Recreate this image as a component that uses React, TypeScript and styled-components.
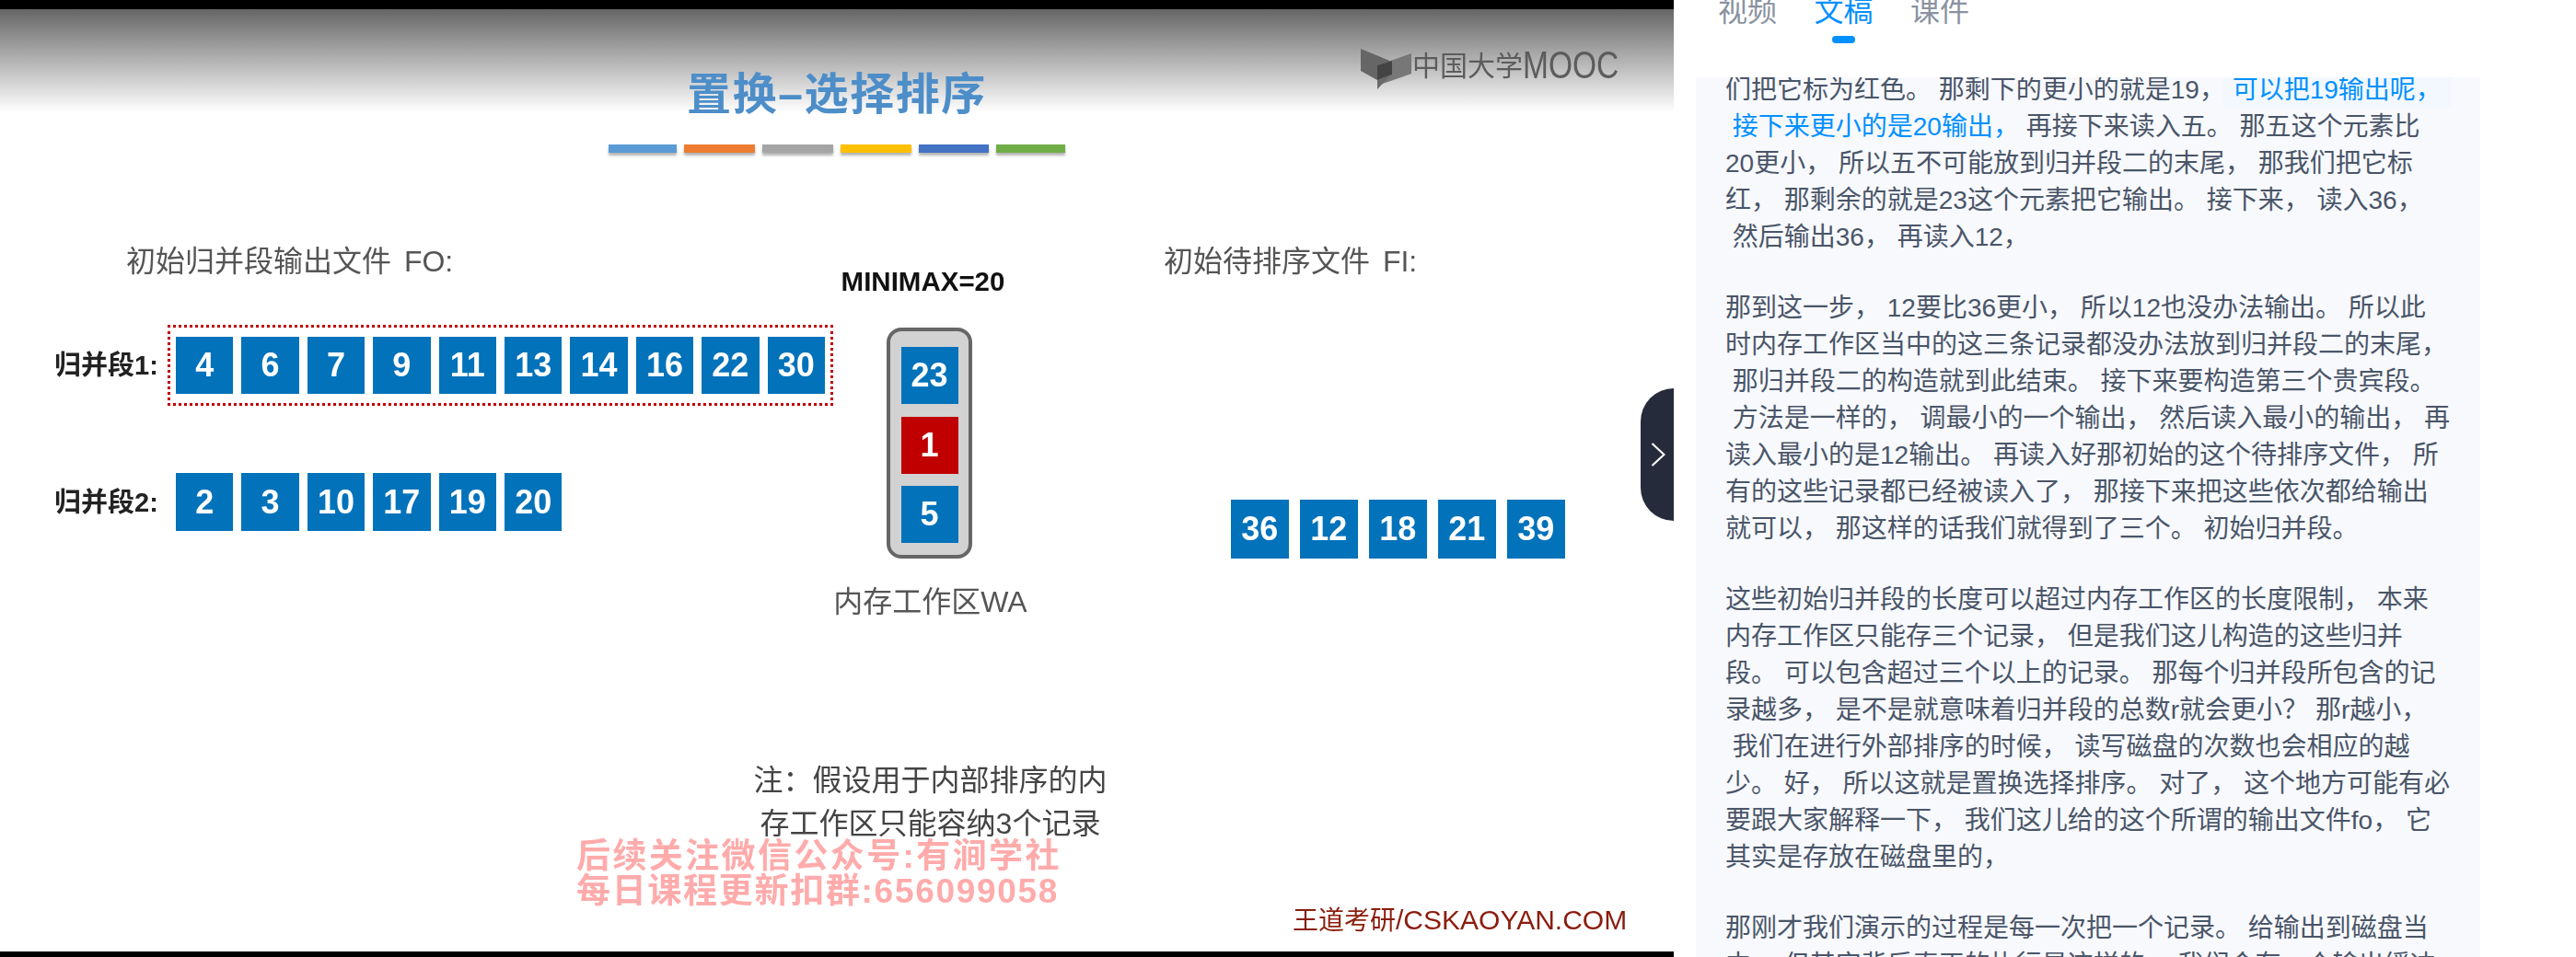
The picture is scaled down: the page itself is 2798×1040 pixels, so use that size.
import React from 'react';
import styled, { createGlobalStyle } from 'styled-components';

const SANS = `"Liberation Sans", "Noto Sans CJK SC", sans-serif`;

const GlobalStyle = createGlobalStyle`
  html, body { margin: 0; padding: 0; background: #fff; }
  body { font-family: ${SANS}; }
`;

const Page = styled.div`
  display: flex;
  width: 2798px;
  height: 1040px;
  overflow: hidden;
  background: #fff;
`;

/* video side */
const Video = styled.div`
  position: relative;
  display: flex;
  flex-direction: column;
  flex: 0 0 1818px;
  min-width: 0;
  height: 1040px;
`;

const BlackBar = styled.div<{ $h: number }>`
  flex: 0 0 ${p => p.$h}px;
  background: #000;
`;

const Slide = styled.div`
  position: relative;
  flex: 1;
  display: flex;
  flex-direction: column;
  background: linear-gradient(#666, #fff) no-repeat 0 0 / 100% 112px, #fff;
  filter: blur(0.7px);
`;

const Title = styled.h1`
  margin: 69px 0 0;
  height: 48px;
  font: 700 48px/48px ${SANS};
  letter-spacing: 1.6px;
  text-align: center;
  color: #4d8ec9;
`;

const ColorBars = styled.div`
  display: flex;
  justify-content: center;
  gap: 8px;
  margin-top: 30px;
`;

const ColorBar = styled.div<{ $c: string; $w: number }>`
  width: ${p => p.$w}px;
  height: 9px;
  background: ${p => p.$c};
  box-shadow: 0 3px 3px rgba(0, 0, 0, 0.3);
`;

const Logo = styled.div`
  position: absolute;
  top: 43px;
  left: 1478px;
  display: flex;
  align-items: center;
  color: #5c5c5c;
`;

const LogoText = styled.div`
  font: 400 30px/34px ${SANS};
  margin-top: -8px;
  white-space: nowrap;
`;

const LogoLatin = styled.span`
  display: inline-block;
  font-size: 33.5px;
  transform: scaleY(1.25);
`;

const Diagram = styled.div`
  display: flex;
  align-items: flex-start;
  margin-top: 102px;
  padding-left: 59px;
`;

const LeftColumn = styled.div`
  flex: 0 0 847px;
`;

const Heading = styled.div<{ $indent: number }>`
  margin-left: ${p => p.$indent}px;
  font: 400 32px/32px ${SANS};
  word-spacing: 5px;
  color: #555;
  white-space: nowrap;
`;

const RunRow = styled.div<{ $top: number }>`
  display: flex;
  align-items: center;
  margin-top: ${p => p.$top}px;
`;

const RunLabel = styled.div`
  flex: 0 0 123px;
  font: 700 29px/32px ${SANS};
  color: #222;
  white-space: nowrap;
`;

const DottedBox = styled.div`
  padding: 10px 6px 10px;
  border: 3px dotted #c00000;
`;

const Cells = styled.div<{ $gap: number; $indent?: number; $top?: number }>`
  display: flex;
  gap: ${p => p.$gap}px;
  margin-left: ${p => p.$indent ?? 0}px;
  margin-top: ${p => p.$top ?? 0}px;
`;

const Cell = styled.div<{ $w?: number; $h?: number; $red?: boolean }>`
  display: flex;
  align-items: center;
  justify-content: center;
  flex: none;
  width: ${p => p.$w ?? 62.4}px;
  height: ${p => p.$h ?? 62}px;
  background: ${p => (p.$red ? '#c00000' : '#0272ba')};
  color: #fff;
  font: 700 36px/1 ${SANS};
`;

const MiddleColumn = styled.div`
  flex: 0 0 209px;
  min-width: 0;
  display: flex;
  flex-direction: column;
  align-items: center;
  padding-top: 23px;
`;

const Minimax = styled.div`
  margin-right: 16px;
  font: 700 29.5px/30px ${SANS};
  color: #111;
  white-space: nowrap;
`;

const MemoryBox = styled.div`
  display: flex;
  flex-direction: column;
  align-items: center;
  gap: 13.5px;
  box-sizing: border-box;
  width: 93px;
  height: 251px;
  margin: 35px 2px 0 0;
  padding-top: 17px;
  border: 4px solid #666;
  border-radius: 16px;
  background: #d2d2d2;
`;

const MemoryLabel = styled.div`
  margin-top: 31px;
  font: 400 32px/32px ${SANS};
  color: #555;
  white-space: nowrap;
`;

const Note = styled.div`
  margin-top: 155px;
  font: 400 32px/47px ${SANS};
  color: #444;
  text-align: center;
  white-space: nowrap;
`;

const RightColumn = styled.div`
  margin-left: 149px;
`;

const Watermark = styled.div`
  position: absolute;
  top: 902px;
  left: 626px;
  font: 700 37px/37.5px ${SANS};
  color: #ffabab;
  white-space: nowrap;
`;

const WatermarkLine = styled.div<{ $spacing: number }>`
  letter-spacing: ${p => p.$spacing}px;
`;

const Credit = styled.div`
  position: absolute;
  top: 974px;
  left: 1404px;
  font: 400 28px/32px ${SANS};
  color: #8b1c0c;
  white-space: nowrap;
`;

const CreditLatin = styled.span`
  font-size: 30px;
`;

const Handle = styled.div`
  position: absolute;
  top: 422px;
  right: 0;
  display: flex;
  align-items: center;
  justify-content: flex-end;
  box-sizing: border-box;
  width: 36px;
  height: 144px;
  padding-right: 9px;
  border-radius: 36px 0 0 36px;
  background: #252b3a;
`;

/* transcript side */
const Side = styled.div`
  flex: 1;
  min-width: 0;
  display: flex;
  flex-direction: column;
  height: 1040px;
  overflow: hidden;
`;

const Tabs = styled.div`
  display: flex;
  gap: 40.5px;
  margin-top: -4px;
  padding-left: 48px;
`;

const Tab = styled.div<{ $active?: boolean }>`
  display: flex;
  flex-direction: column;
  align-items: center;
  font: 400 32px/32px ${SANS};
  color: ${p => (p.$active ? '#0090ff' : '#8a92a0')};
`;

const TabMark = styled.div<{ $on?: boolean }>`
  width: 25px;
  height: 8px;
  margin-top: 11px;
  border-radius: 4px;
  background: ${p => (p.$on ? '#0090ff' : 'transparent')};
`;

const Transcript = styled.div`
  flex: 1;
  width: 852px;
  margin: 37px 0 0 24px;
  padding-left: 32px;
  box-sizing: border-box;
  overflow: hidden;
  background: #f7f9fd;
`;

const TranscriptFlow = styled.div`
  margin-top: -6px;
`;

const Para = styled.div`
  margin-bottom: 37px;
`;

const Line = styled.div`
  font: 400 28px/40px ${SANS};
  color: #4a5568;
  white-space: pre;
`;

const Spoken = styled.span<{ $box?: boolean }>`
  color: #0090ff;
  ${p => (p.$box ? 'background: #f3f8fe; padding: 0 10px 4px; margin-left: -10px;' : '')}
`;

const run1 = [4, 6, 7, 9, 11, 13, 14, 16, 22, 30];
const run2 = [2, 3, 10, 17, 19, 20];
const input = [36, 12, 18, 21, 39];
const colorBars = [
  { c: '#5b9bd5', w: 74 },
  { c: '#ed7d31', w: 77 },
  { c: '#a5a5a5', w: 77 },
  { c: '#ffc000', w: 77 },
  { c: '#4472c4', w: 76 },
  { c: '#70ad47', w: 75 },
];

const paragraphs: React.ReactNode[][] = [
  [
    <>们把它标为红色。 那剩下的更小的就是19， <Spoken $box>可以把19输出呢，</Spoken></>,
    <><Spoken> 接下来更小的是20输出，</Spoken> 再接下来读入五。 那五这个元素比</>,
    '20更小， 所以五不可能放到归并段二的末尾， 那我们把它标',
    '红， 那剩余的就是23这个元素把它输出。 接下来， 读入36，',
    ' 然后输出36， 再读入12，',
  ],
  [
    '那到这一步， 12要比36更小， 所以12也没办法输出。 所以此',
    '时内存工作区当中的这三条记录都没办法放到归并段二的末尾，',
    ' 那归并段二的构造就到此结束。 接下来要构造第三个贵宾段。',
    ' 方法是一样的， 调最小的一个输出， 然后读入最小的输出， 再',
    '读入最小的是12输出。 再读入好那初始的这个待排序文件， 所',
    '有的这些记录都已经被读入了， 那接下来把这些依次都给输出',
    '就可以， 那这样的话我们就得到了三个。 初始归并段。',
  ],
  [
    '这些初始归并段的长度可以超过内存工作区的长度限制， 本来',
    '内存工作区只能存三个记录， 但是我们这儿构造的这些归并',
    '段。 可以包含超过三个以上的记录。 那每个归并段所包含的记',
    '录越多， 是不是就意味着归并段的总数r就会更小？ 那r越小，',
    ' 我们在进行外部排序的时候， 读写磁盘的次数也会相应的越',
    '少。 好， 所以这就是置换选择排序。 对了， 这个地方可能有必',
    '要跟大家解释一下， 我们这儿给的这个所谓的输出文件fo， 它',
    '其实是存放在磁盘里的，',
  ],
  [
    '那刚才我们演示的过程是每一次把一个记录。 给输出到磁盘当',
    '中， 但其实背后真正的执行是这样的， 我们会有一个输出缓冲',
  ],
];

function MoocMark() {
  return (
    <svg width="56" height="44" viewBox="0 0 56 44">
      <polygon points="0,0 34,14 34,28 18,34 0,24" fill="#666" />
      <polygon points="18,18 55,5 55,27 18,40" fill="#777" />
      <polygon points="18,18 34,13 34,28 18,34" fill="#444" />
      <polygon points="18,34 33,28 18,44" fill="#6a6a6a" />
    </svg>
  );
}

export default function App() {
  return (
    <Page>
      <GlobalStyle />
      <Video>
        <BlackBar $h={10} />
        <Slide>
          <Title>置换–选择排序</Title>
          <ColorBars>
            {colorBars.map(b => <ColorBar key={b.c} $c={b.c} $w={b.w} />)}
          </ColorBars>
          <Logo>
            <MoocMark />
            <LogoText>中国大学<LogoLatin>MOOC</LogoLatin></LogoText>
          </Logo>
          <Diagram>
            <LeftColumn>
              <Heading $indent={78}>初始归并段输出文件 FO:</Heading>
              <RunRow $top={53}>
                <RunLabel>归并段1:</RunLabel>
                <DottedBox>
                  <Cells $gap={9}>
                    {run1.map(n => <Cell key={n}>{n}</Cell>)}
                  </Cells>
                </DottedBox>
              </RunRow>
              <RunRow $top={73}>
                <RunLabel>归并段2:</RunLabel>
                <Cells $gap={9} $indent={9}>
                  {run2.map(n => <Cell key={n} $h={63}>{n}</Cell>)}
                </Cells>
              </RunRow>
            </LeftColumn>
            <MiddleColumn>
              <Minimax>MINIMAX=20</Minimax>
              <MemoryBox>
                <Cell $w={62}>23</Cell>
                <Cell $w={62} $red>1</Cell>
                <Cell $w={62}>5</Cell>
              </MemoryBox>
              <MemoryLabel>内存工作区WA</MemoryLabel>
              <Note>注：假设用于内部排序的内<br />存工作区只能容纳3个记录</Note>
            </MiddleColumn>
            <RightColumn>
              <Heading $indent={0}>初始待排序文件 FI:</Heading>
              <Cells $gap={12.5} $indent={73} $top={243}>
                {input.map(n => <Cell key={n} $w={62.5} $h={64}>{n}</Cell>)}
              </Cells>
            </RightColumn>
          </Diagram>
          <Watermark>
            <WatermarkLine $spacing={2.4}>后续关注微信公众号:有涧学社</WatermarkLine>
            <WatermarkLine $spacing={1.7}>每日课程更新扣群:656099058</WatermarkLine>
          </Watermark>
          <Credit>王道考研<CreditLatin>/CSKAOYAN.COM</CreditLatin></Credit>
        </Slide>
        <BlackBar $h={6} />
        <Handle>
          <svg width="16" height="26" viewBox="0 0 16 26">
            <path d="M1.5 1 L14.5 13 L1.5 25" fill="none" stroke="#fff" strokeWidth="2.2" />
          </svg>
        </Handle>
      </Video>
      <Side>
        <Tabs>
          <Tab>视频<TabMark /></Tab>
          <Tab $active>文稿<TabMark $on /></Tab>
          <Tab>课件<TabMark /></Tab>
        </Tabs>
        <Transcript>
          <TranscriptFlow>
            {paragraphs.map((lines, i) => (
              <Para key={i}>
                {lines.map((line, j) => <Line key={j}>{line}</Line>)}
              </Para>
            ))}
          </TranscriptFlow>
        </Transcript>
      </Side>
    </Page>
  );
}
